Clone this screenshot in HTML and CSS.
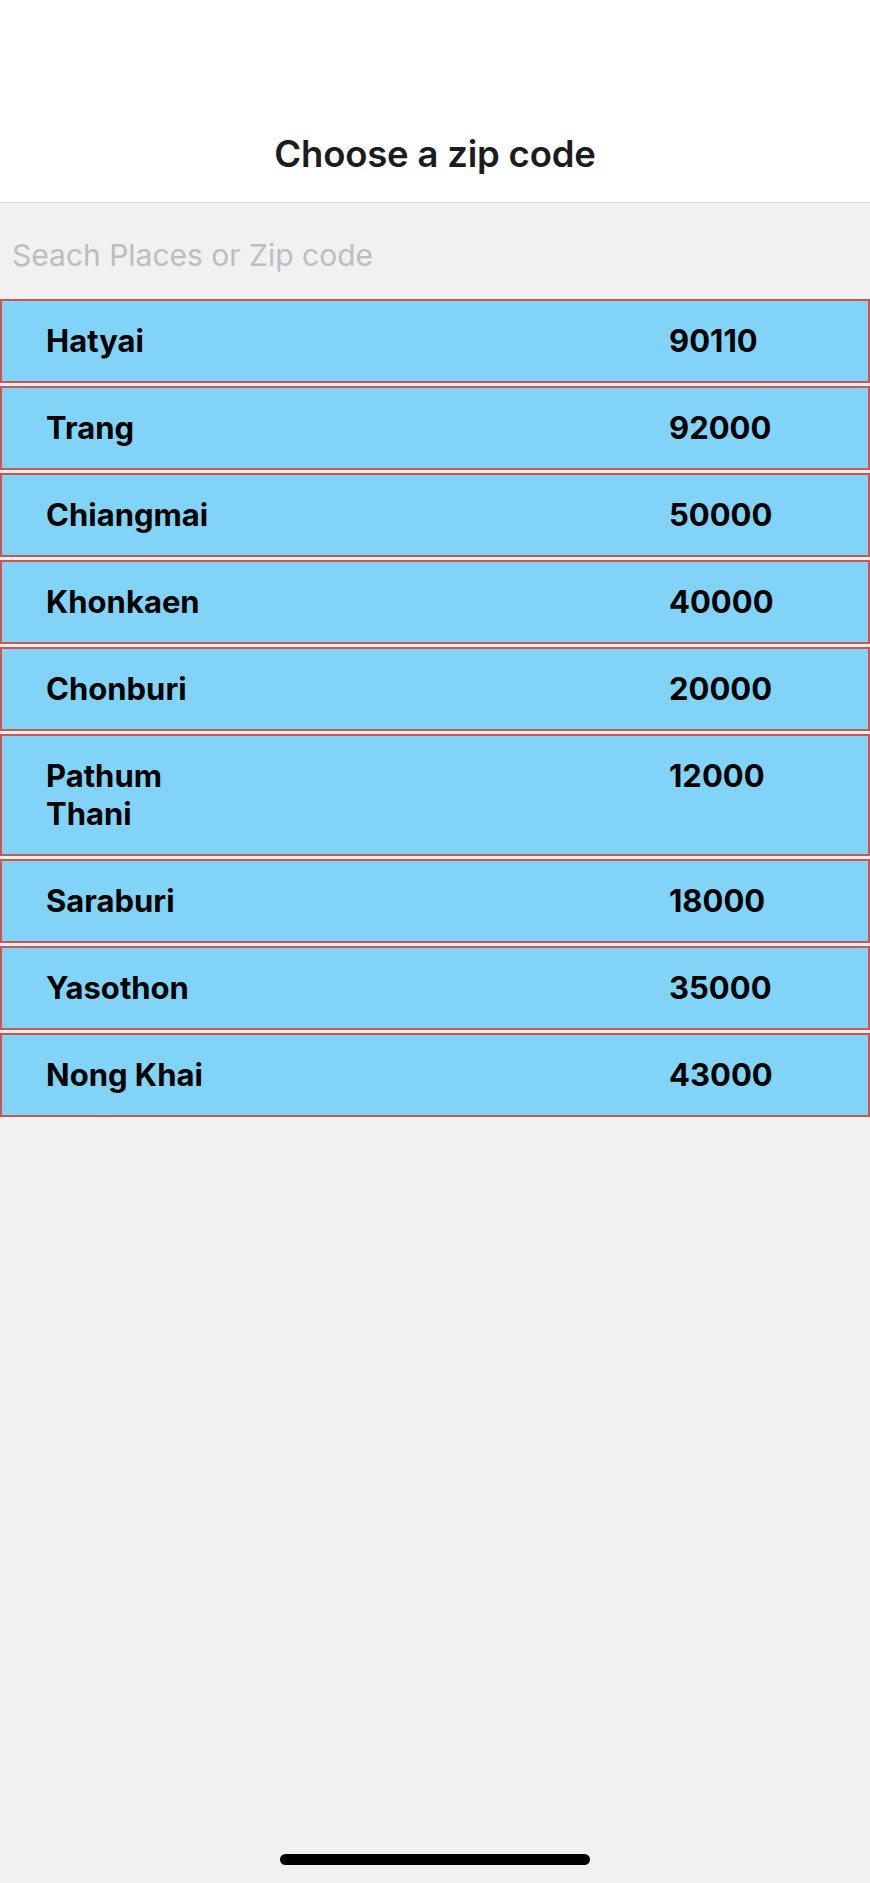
FILE: index.html
```html
<!DOCTYPE html>
<html lang="en">
<head>
<meta charset="utf-8">
<title>Choose a zip code</title>
<link rel="stylesheet" href="styles.css">
</head>
<body>
<div class="screen">
  <header class="header">
    <h1 class="title">Choose a zip code</h1>
  </header>
  <div class="search">
    <input class="search-input" type="text" placeholder="Seach Places or Zip code">
  </div>
  <ul class="list">
    <li class="row"><span class="name">Hatyai</span><span class="zip">90110</span></li>
    <li class="row"><span class="name">Trang</span><span class="zip">92000</span></li>
    <li class="row"><span class="name">Chiangmai</span><span class="zip">50000</span></li>
    <li class="row"><span class="name">Khonkaen</span><span class="zip">40000</span></li>
    <li class="row"><span class="name">Chonburi</span><span class="zip">20000</span></li>
    <li class="row"><span class="name">Pathum Thani</span><span class="zip">12000</span></li>
    <li class="row"><span class="name">Saraburi</span><span class="zip">18000</span></li>
    <li class="row"><span class="name">Yasothon</span><span class="zip">35000</span></li>
    <li class="row"><span class="name">Nong Khai</span><span class="zip">43000</span></li>
  </ul>
  <div class="home-indicator"></div>
</div>
</body>
</html>
```

FILE: styles.css
```css
* {
  box-sizing: border-box;
}

html, body {
  margin: 0;
  padding: 0;
}

body {
  background: #f1f1f1;
  font-family: "Inter", "Roboto", "Liberation Sans", sans-serif;
  color: #000;
}

.screen {
  min-height: 1883px;
  display: flex;
  flex-direction: column;
}

.header {
  background: #ffffff;
  height: 203px;
  border-bottom: 1px solid #d9d9d9;
  display: flex;
  align-items: flex-end;
  justify-content: center;
  padding-bottom: 28px;
}

.title {
  margin: 0;
  font-size: 36.5px;
  line-height: 40px;
  font-weight: 600;
  color: #1c1c1e;
  letter-spacing: -0.2px;
}

.search {
  height: 96px;
  padding-top: 32px;
}

.search-input {
  display: block;
  width: 100%;
  height: 40px;
  border: none;
  outline: none;
  background: transparent;
  padding: 0 12px;
  font-family: "Inter", "Roboto", "Liberation Sans", sans-serif;
  font-size: 30px;
  color: #000;
}

.search-input::placeholder {
  color: #bebebe;
}

.list {
  list-style: none;
  margin: 0;
  padding: 0;
}

.row {
  display: grid;
  grid-template-columns: 180px 1fr 199px;
  align-items: start;
  background: #81d4f7;
  border: 2px solid #d1544e;
  margin-bottom: 3px;
  padding: 21px 0 21px 44px;
  font-size: 31px;
  line-height: 38px;
  font-weight: 700;
}

.name {
  grid-column: 1;
}

.zip {
  grid-column: 3;
}

.home-indicator {
  margin: auto auto 18px;
  width: 310px;
  height: 11px;
  border-radius: 6px;
  background: #000;
}
```
